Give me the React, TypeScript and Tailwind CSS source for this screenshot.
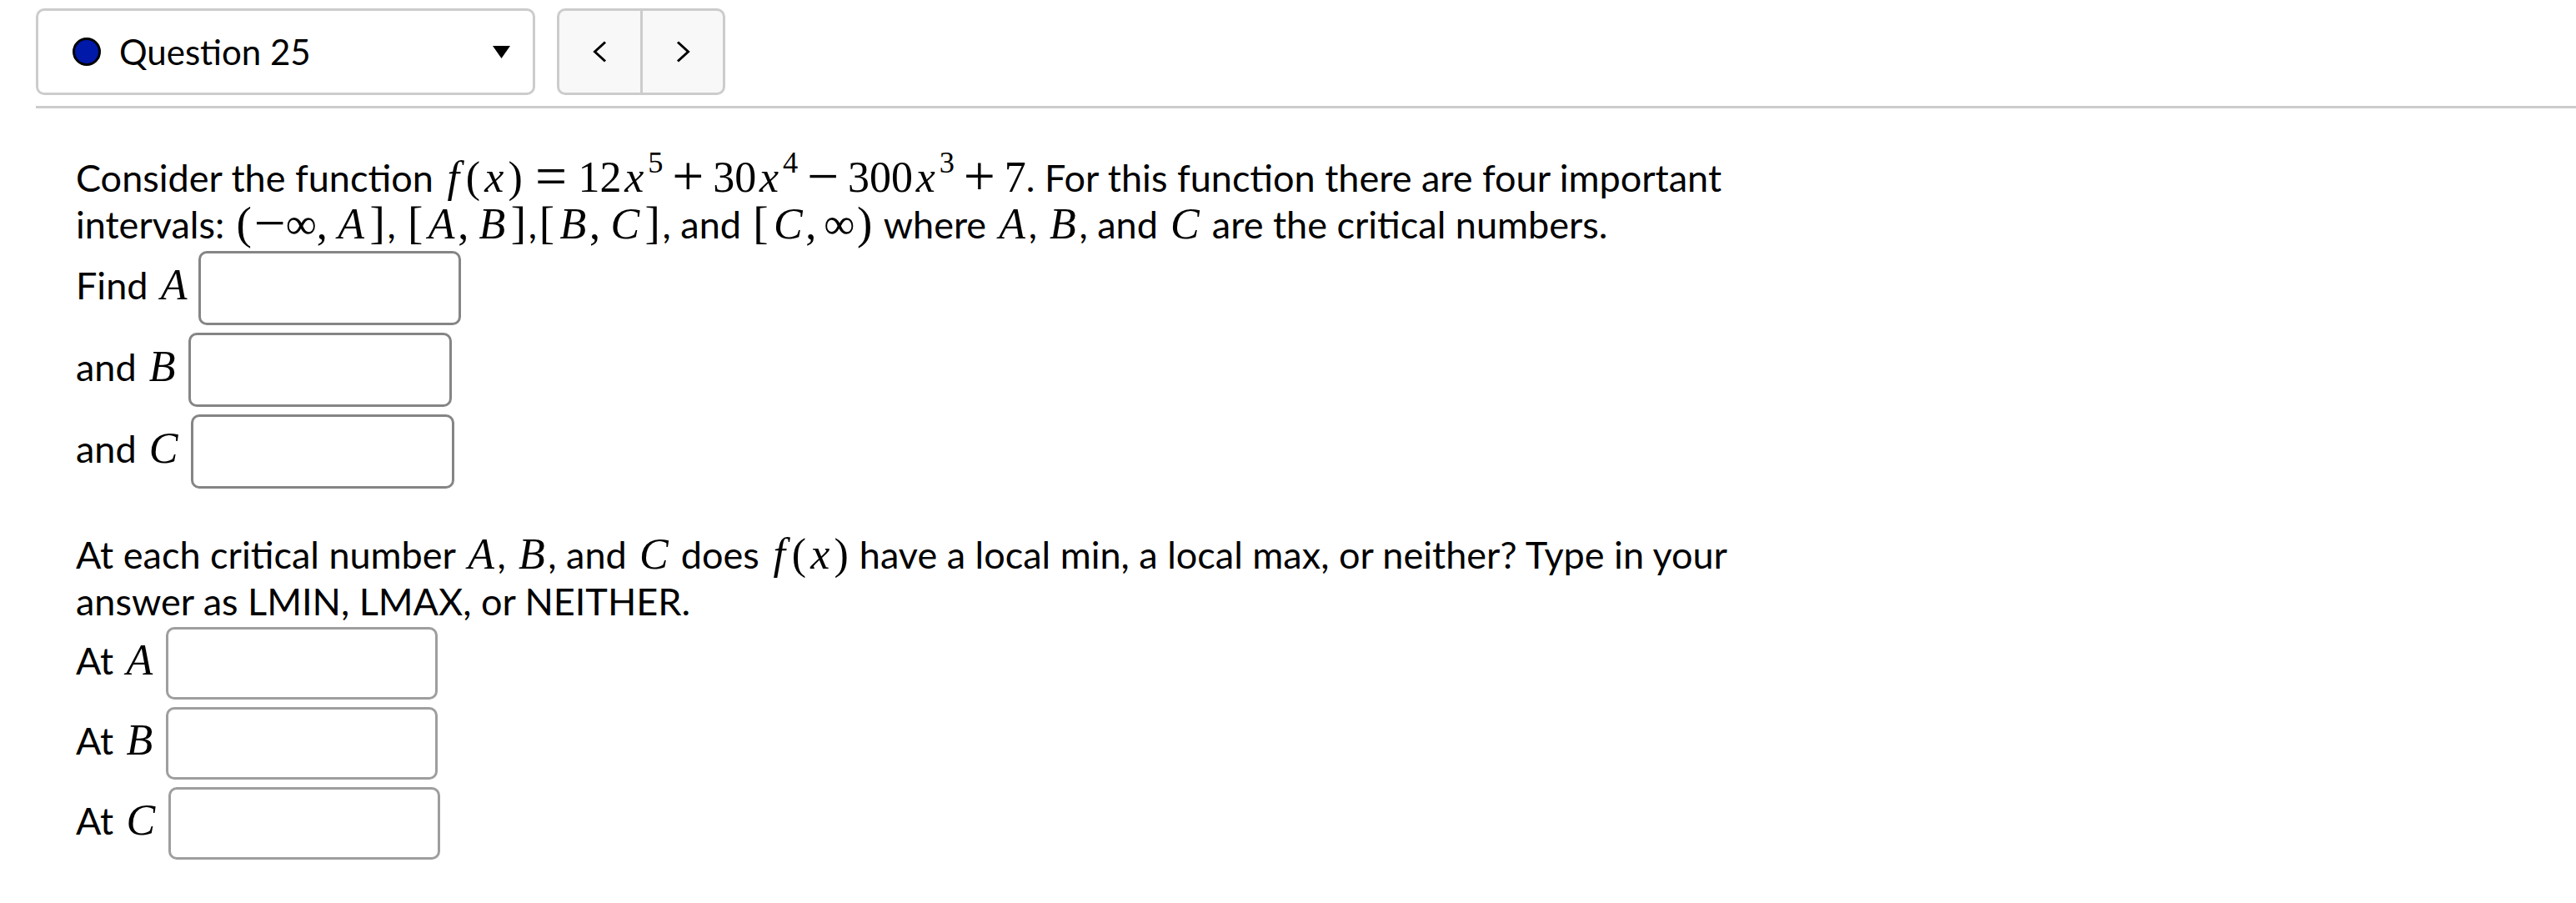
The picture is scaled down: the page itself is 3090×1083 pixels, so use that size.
import React from "react";

const MATH = "font-['Liberation_Serif','Times_New_Roman',serif] text-[52px] leading-[0]";

function V({ children }: { children: React.ReactNode }) {
  return <i className="px-[0.07em]">{children}</i>;
}

function F() {
  return <i className="pl-[0.1em] pr-[0.12em]">f</i>;
}

function Op({ children }: { children: React.ReactNode }) {
  return <span className="relative top-[0.06em] mx-[0.16em] text-[1.3em] leading-[0]">{children}</span>;
}

function Rel({ children }: { children: React.ReactNode }) {
  return <span className="relative top-[0.06em] mx-[0.2em] text-[1.3em] leading-[0]">{children}</span>;
}

function Sup({ children }: { children: React.ReactNode }) {
  return <sup className="text-[0.7em] top-[-0.62em] pl-[0.04em]">{children}</sup>;
}

function P({ children }: { children: React.ReactNode }) {
  return <span className="px-[0.03em]">{children}</span>;
}

function D({ children }: { children: React.ReactNode }) {
  return <span className="px-[0.05em] text-[1.06em] leading-[0]">{children}</span>;
}

function Comma() {
  return <span className="mr-[0.17em]">,</span>;
}

function M({ children }: { children: React.ReactNode }) {
  return <span className={MATH}>{children}</span>;
}

function Row({ label, v, w, h, border, gap }: { label: string; v: string; w: string; h: string; border: string; gap: string }) {
  return (
    <div className="flex items-center">
      <span className="pb-[7px] leading-[52px] whitespace-nowrap">
        {label} <M><V>{v}</V></M>
      </span>
      <input type="text" aria-label={`${label} ${v}`} className={`${gap} ${w} ${h} rounded-[10px] border-[3px] ${border} bg-white outline-none`} />
    </div>
  );
}

export default function App() {
  return (
    <div className="min-h-screen w-full bg-white text-black font-['Lato','Liberation_Sans',sans-serif]">
      {/* header */}
      <div className="pt-[10px]">
        <div className="flex pl-[43px]">
          <div className="flex h-[104px] w-[599px] items-center rounded-[10px] border-[3px] border-[#cccccc] bg-white pl-[41px] pr-[27px]">
            <div className="h-[34px] w-[34px] rounded-full border-[3px] border-black bg-[#0019a8]" />
            <span className="ml-[22px] text-[42px] leading-none">Question 25</span>
            <svg className="ml-auto" width="21" height="15" viewBox="0 0 21 15">
              <polygon points="0,0 21,0 10.5,15" fill="#000" />
            </svg>
          </div>
          <div className="ml-[26px] flex h-[104px] w-[202px] overflow-hidden rounded-[10px] border-[3px] border-[#cccccc] bg-[#f8f8f8]">
            <button className="flex w-[97px] items-center justify-center" aria-label="Previous">
              <svg width="17" height="26" viewBox="0 0 17 26">
                <polyline points="15,1.5 2.5,13 15,24.5" fill="none" stroke="#000" strokeWidth="3" />
              </svg>
            </button>
            <div className="w-[3px] bg-[#cccccc]" />
            <button className="flex flex-1 items-center justify-center" aria-label="Next">
              <svg width="17" height="26" viewBox="0 0 17 26">
                <polyline points="2,1.5 14.5,13 2,24.5" fill="none" stroke="#000" strokeWidth="3" />
              </svg>
            </button>
          </div>
        </div>
        <div className="ml-[43px] mt-[13px] h-[3px] bg-[#cccccc]" />
      </div>

      {/* content */}
      <div className="pl-[91px] text-[45px] leading-[56px]">
        <p className="mt-[55px] whitespace-nowrap">
          Consider the function{" "}
          <M>
            <F />
            <P>(</P>
            <V>x</V>
            <P>)</P>
            <Rel>=</Rel>12<V>x</V>
            <Sup>5</Sup>
            <Op>+</Op>30<V>x</V>
            <Sup>4</Sup>
            <Op>−</Op>300<V>x</V>
            <Sup>3</Sup>
            <Op>+</Op>7
          </M>
          . For this function there are four important
          <br />
          intervals:{" "}
          <M>
            <D>(</D>
            <span className="relative top-[0.06em] text-[1.3em] leading-[0]">−</span>∞<Comma />
            <V>A</V>
            <D>]</D>
          </M>
          ,{" "}
          <M>
            <D>[</D>
            <V>A</V>
            <Comma />
            <V>B</V>
            <D>]</D>
          </M>
          ,
          <M>
            <D>[</D>
            <V>B</V>
            <Comma />
            <V>C</V>
            <D>]</D>
          </M>
          , and{" "}
          <M>
            <D>[</D>
            <V>C</V>
            <Comma />∞<D>)</D>
          </M>{" "}
          where <M><V>A</V></M>, <M><V>B</V></M>, and <M><V>C</V></M> are the critical numbers.
        </p>

        <div className="mt-[4px] flex flex-col gap-[9px]">
          <Row label="Find" v="A" gap="ml-[10px]" w="w-[315px]" h="h-[89px]" border="border-[#858585]" />
          <Row label="and" v="B" gap="ml-[12px]" w="w-[316px]" h="h-[89px]" border="border-[#858585]" />
          <Row label="and" v="C" gap="ml-[12px]" w="w-[316px]" h="h-[89px]" border="border-[#858585]" />
        </div>

        <p className="mt-[51px] whitespace-nowrap">
          At each critical number <M><V>A</V></M>, <M><V>B</V></M>, and <M><V>C</V></M> does{" "}
          <M>
            <F />
            <P>(</P>
            <V>x</V>
            <P>)</P>
          </M>{" "}
          have a local min, a local max, or neither? Type in your
          <br />
          answer as LMIN, LMAX, or NEITHER.
        </p>

        <div className="mt-[3px] flex flex-col gap-[9px]">
          <Row label="At" v="A" gap="ml-[12px]" w="w-[326px]" h="h-[87px]" border="border-[#9e9e9e]" />
          <Row label="At" v="B" gap="ml-[12px]" w="w-[326px]" h="h-[87px]" border="border-[#9e9e9e]" />
          <Row label="At" v="C" gap="ml-[12px]" w="w-[326px]" h="h-[87px]" border="border-[#9e9e9e]" />
        </div>
      </div>
    </div>
  );
}
